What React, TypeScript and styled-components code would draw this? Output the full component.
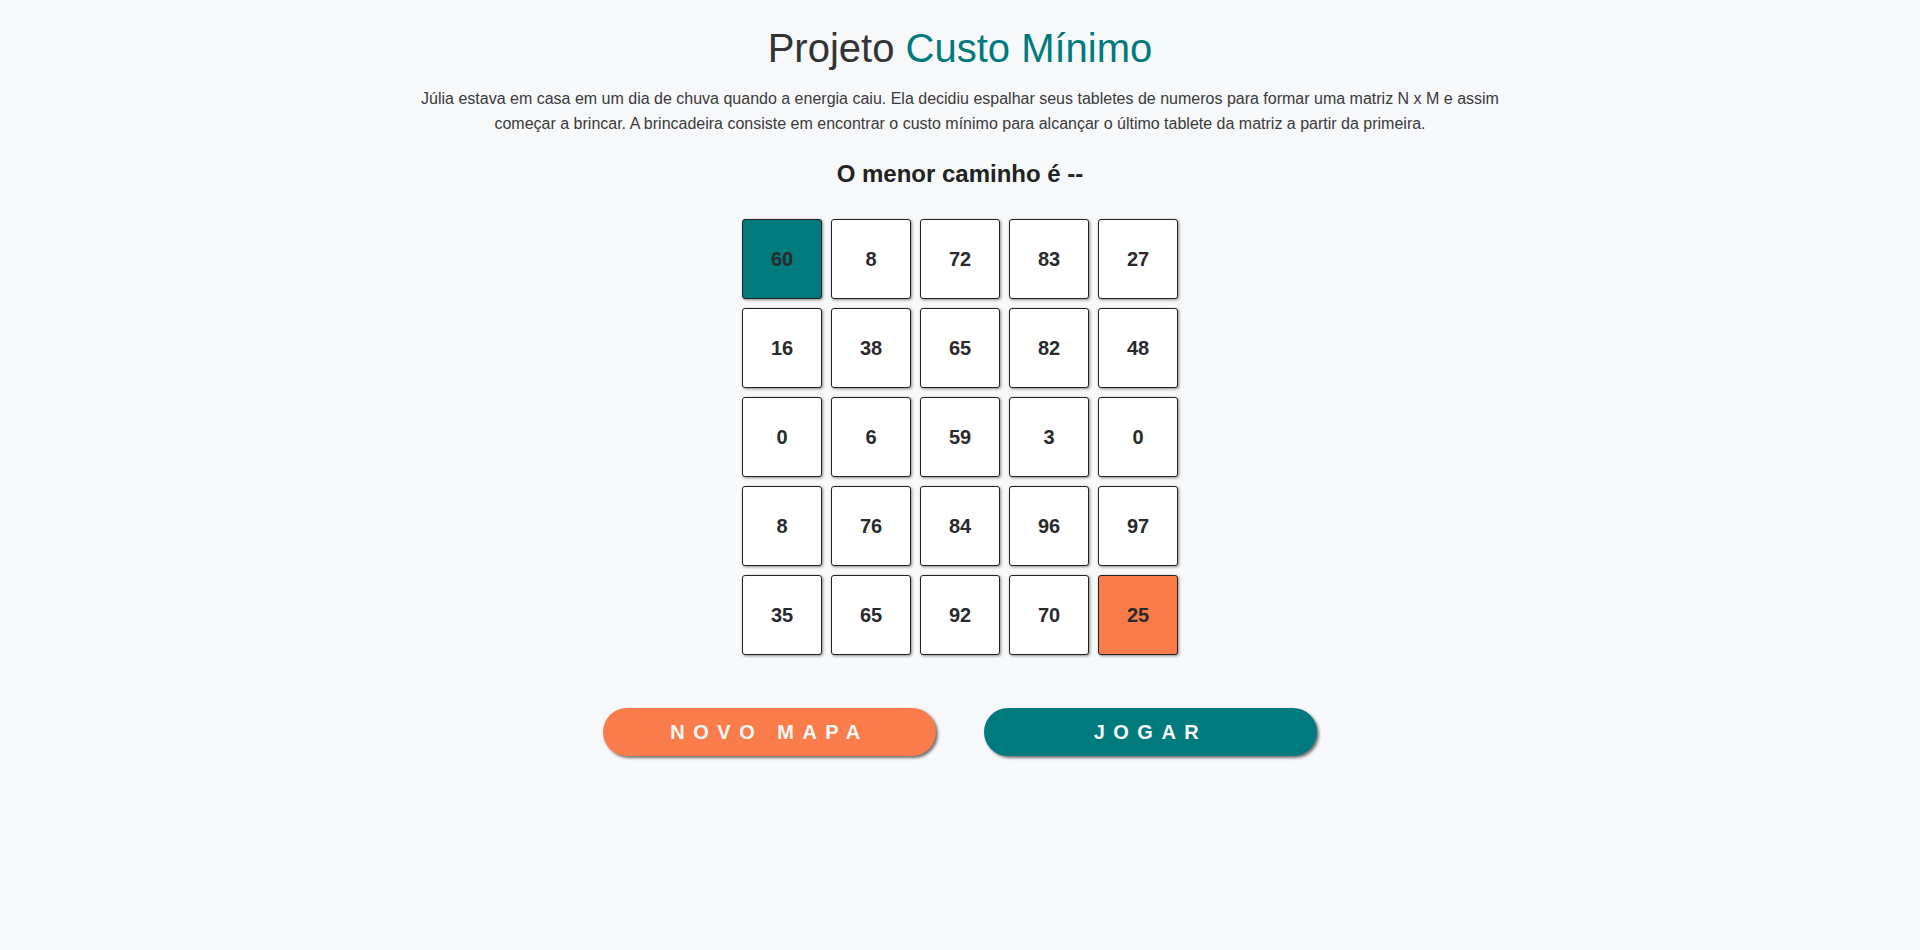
import React from "react";
import styled, { createGlobalStyle } from "styled-components";

const GlobalStyle = createGlobalStyle`
  html, body {
    margin: 0;
    padding: 0;
    background: #f7f8fa;
    font-family: "Liberation Sans", Arial, sans-serif;
    color: #333;
  }
`;

const Page = styled.main`
  min-height: 950px;
  display: flex;
  flex-direction: column;
  align-items: center;
  padding-top: 25px;
  box-sizing: border-box;
`;

const Title = styled.h1`
  margin: 0;
  font-size: 40px;
  font-weight: 400;
  line-height: 46px;
  color: #333;
`;

const Accent = styled.span`
  color: #007a7c;
`;

const Description = styled.p`
  margin: 16px 0 0;
  max-width: 1100px;
  text-align: center;
  font-size: 16px;
  line-height: 24.5px;
  color: #3a3a3a;
`;

const Result = styled.h2`
  margin: 24px 0 0;
  font-size: 24px;
  font-weight: 700;
  line-height: 28px;
  color: #222;
`;

const Board = styled.div`
  margin-top: 31px;
  display: grid;
  grid-template-columns: repeat(5, 80px);
  grid-auto-rows: 80px;
  gap: 9px;
`;

const Cell = styled.div<{ $tone: "start" | "end" | "plain" }>`
  box-sizing: border-box;
  display: flex;
  align-items: center;
  justify-content: center;
  border: 1px solid #222;
  border-radius: 3px;
  box-shadow: 1px 1px 3px rgba(0, 0, 0, 0.45);
  font-size: 20px;
  font-weight: 700;
  color: #2a2a2e;
  background: ${(p) =>
    p.$tone === "start" ? "#007a7c" : p.$tone === "end" ? "#fa7c4a" : "#ffffff"};
`;

const Actions = styled.div`
  margin-top: 53px;
  display: flex;
  gap: 48px;
`;

const PillButton = styled.button<{ $variant: "orange" | "teal" }>`
  width: 333px;
  height: 48px;
  border: none;
  border-radius: 24px;
  background: ${(p) => (p.$variant === "orange" ? "#fa7c4a" : "#007a7c")};
  color: #f7f7f7;
  font-family: "Liberation Sans", Arial, sans-serif;
  font-size: 20px;
  font-weight: 700;
  letter-spacing: 8.5px;
  text-transform: uppercase;
  box-shadow: 2px 2px 3px rgba(0, 0, 0, 0.55);
  cursor: pointer;
`;

const grid = [
  [60, 8, 72, 83, 27],
  [16, 38, 65, 82, 48],
  [0, 6, 59, 3, 0],
  [8, 76, 84, 96, 97],
  [35, 65, 92, 70, 25],
];

export default function App() {
  return (
    <>
      <GlobalStyle />
      <Page>
        <Title>
          Projeto <Accent>Custo Mínimo</Accent>
        </Title>
        <Description>
          Júlia estava em casa em um dia de chuva quando a energia caiu. Ela decidiu espalhar seus
          tabletes de numeros para formar uma matriz N x M e assim começar a brincar. A brincadeira
          consiste em encontrar o custo mínimo para alcançar o último tablete da matriz a partir da
          primeira.
        </Description>
        <Result>O menor caminho é --</Result>
        <Board>
          {grid.map((row, r) =>
            row.map((v, c) => (
              <Cell
                key={`${r}-${c}`}
                $tone={r === 0 && c === 0 ? "start" : r === 4 && c === 4 ? "end" : "plain"}
              >
                {v}
              </Cell>
            ))
          )}
        </Board>
        <Actions>
          <PillButton $variant="orange">Novo Mapa</PillButton>
          <PillButton $variant="teal">Jogar</PillButton>
        </Actions>
      </Page>
    </>
  );
}
